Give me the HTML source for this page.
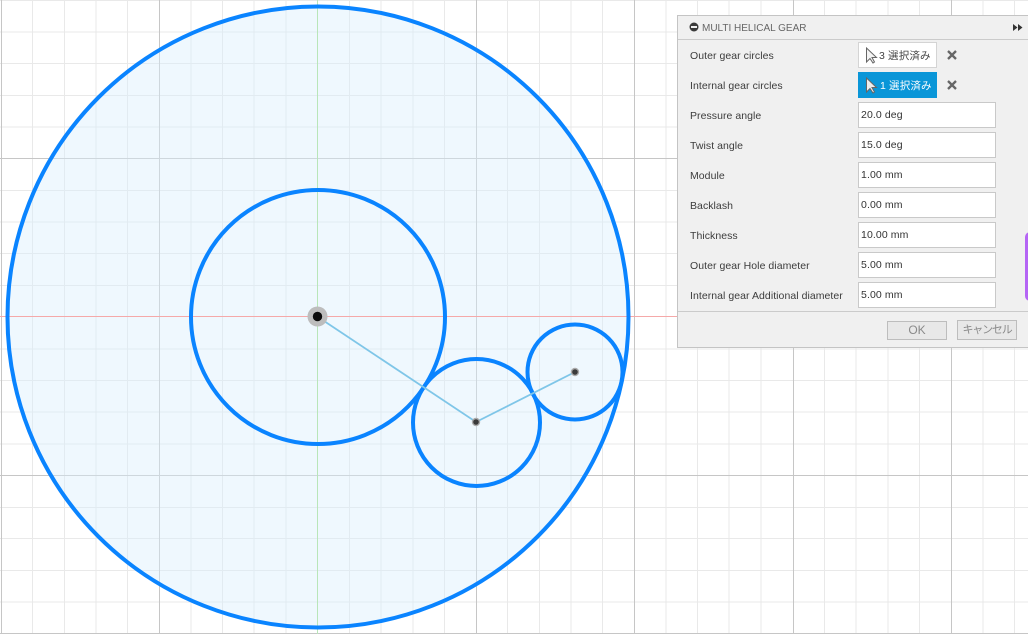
<!DOCTYPE html>
<html><head><meta charset="utf-8"><style>
html,body{margin:0;padding:0;width:1028px;height:634px;overflow:hidden;background:#fff}
body{position:relative;font-family:"Liberation Sans","Noto Sans CJK JP",sans-serif}
svg{position:absolute;left:0;top:0}
.panel{position:absolute;left:677px;top:15px;width:351px;height:333px;box-sizing:border-box;background:#f0f0f0;border:1px solid #c4c4c4;border-right:none}
.t,.title{position:absolute;font-size:10.5px;line-height:14px;color:#3c3c3c;white-space:nowrap}
.title{left:24px;top:5px;line-height:15px;color:#666;font-size:10px;letter-spacing:0}
.t{left:12px;letter-spacing:.05px}
.inp{position:absolute;left:180px;width:138px;height:26px;box-sizing:border-box;background:#fff;border:1px solid #c9c9c9;font-size:10.5px;line-height:24px;padding-left:2px;color:#333;letter-spacing:.1px}
.sel{position:absolute;left:180px;width:79px;height:26px;box-sizing:border-box;font-size:10.5px;line-height:26px;white-space:nowrap;letter-spacing:.15px}
.line{position:absolute;left:0;width:351px;height:1px;background:#cbcbcb}
.btn{position:absolute;box-sizing:border-box;background:#e8e8e8;border:1px solid #bdbdbd;color:#8a8a8a;text-align:center;font-size:12px;line-height:17px;white-space:nowrap;overflow:hidden}
</style></head><body>
<svg width="1028" height="634" viewBox="0 0 1028 634">
<g stroke="#e9e9e9" stroke-width="1">
<path d="M32.5 0V634M64.5 0V634M96 0V634M127.500 0V634M191 0V634M222.500 0V634M254 0V634M286 0V634M349.500 0V634M381 0V634M413 0V634M444.500 0V634M507.500 0V634M539.500 0V634M571 0V634M602.500 0V634M666 0V634M697.500 0V634M729 0V634M761 0V634M824.500 0V634M856 0V634M888 0V634M919.500 0V634M983 0V634M1014.500 0V634"/>
<path d="M0 .5H1028M0 32H1028M0 63.500H1028M0 95.500H1028M0 127H1028M0 190.500H1028M0 222H1028M0 253.500H1028M0 285.500H1028M0 349H1028M0 380.500H1028M0 412H1028M0 444H1028M0 507.500H1028M0 538.500H1028M0 570.500H1028M0 602H1028"/>
</g>
<g stroke="#c6c6c6" stroke-width="1">
<path d="M1.500 0V634M159.500 0V634M476.500 0V634M634.500 0V634M793.500 0V634M951.500 0V634"/>
<path d="M0 158.500H1028M0 475.500H1028M0 633.500H1028"/>
</g>
<circle cx="318" cy="317" r="310" fill="#d9eefc" fill-opacity=".42" stroke="none"/>
<path d="M317.500 0V634" stroke="#b9e6b9" stroke-width="1"/>
<path d="M0 316.500H1028" stroke="#f5a9a9" stroke-width="1"/>
<g fill="none" stroke="#0a84ff" stroke-width="4">
<circle cx="318" cy="317" r="310.500"/>
<circle cx="318" cy="317" r="127"/>
<circle cx="476.500" cy="422.500" r="63.500"/>
<circle cx="575" cy="372" r="47.500"/>
</g>
<path d="M318 317L476 422L575 372" fill="none" stroke="#7fc6e8" stroke-width="1.800"/>
<circle cx="317.500" cy="316.500" r="10" fill="#bdbdbd"/>
<circle cx="317.500" cy="316.500" r="4.700" fill="#0c0c0c"/>
<circle cx="476" cy="422" r="4.200" fill="#aaa"/>
<circle cx="476" cy="422" r="2.800" fill="#3a3a3a"/>
<circle cx="575" cy="372" r="4.200" fill="#aaa"/>
<circle cx="575" cy="372" r="2.800" fill="#3a3a3a"/>
</svg>
<div class="panel">
<svg width="351" height="333" style="left:-1px;top:-1px">
<circle cx="17" cy="12" r="4.500" fill="#3a3a3a"/><rect x="14" y="11" width="6" height="2" fill="#f0f0f0"/>
<path d="M336 9L340.500 12.500L336 16ZM341 9L345.500 12.500L341 16Z" fill="#333"/>
<path d="M271 36L279 44M279 36L271 44M271 66L279 74M279 66L271 74" stroke="#666" stroke-width="2.300" fill="none"/>
</svg>
<div class="title">MULTI HELICAL GEAR</div>
<div class="line" style="top:23px"></div>
<div class="t" style="top:33px">Outer gear circles</div>
<div class="t" style="top:63px">Internal gear circles</div>
<div class="t" style="top:93px">Pressure angle</div>
<div class="t" style="top:123px">Twist angle</div>
<div class="t" style="top:153px">Module</div>
<div class="t" style="top:183px">Backlash</div>
<div class="t" style="top:213px">Thickness</div>
<div class="t" style="top:243px">Outer gear Hole diameter</div>
<div class="t" style="top:273px">Internal gear Additional diameter</div>
<div class="sel" style="top:26px;background:#fff;border:1px solid #d4d4d4;color:#444;line-height:27px;padding-left:20px">3 選択済み
<svg width="14" height="18" style="left:5px;top:4px"><path d="M2.500 1V15L6 11.500L9 16L10.500 15L8 10.500H12.500Z" fill="#f4f4f4" stroke="#666" stroke-width="1"/></svg></div>
<div class="sel" style="top:56px;background:#0a96d8;color:#fff;line-height:28px;padding-left:22px">1 選択済み
<svg width="14" height="18" style="left:6px;top:5px"><path d="M2.500 1V15L6 11.500L9 16L10.500 15L8 10.500H12.500Z" fill="#eee" stroke="#666" stroke-width="1"/></svg></div>
<div class="inp" style="top:86px">20.0 deg</div>
<div class="inp" style="top:116px">15.0 deg</div>
<div class="inp" style="top:146px">1.00 mm</div>
<div class="inp" style="top:176px">0.00 mm</div>
<div class="inp" style="top:206px">10.00 mm</div>
<div class="inp" style="top:236px">5.00 mm</div>
<div class="inp" style="top:266px">5.00 mm</div>
<div class="line" style="top:295px"></div>
<div class="btn" style="left:209px;top:305px;width:60px;height:19px">OK</div>
<div class="btn" style="left:279px;top:304px;width:60px;height:20px;line-height:19px;font-size:11px;letter-spacing:-1.2px">キャンセル</div>
</div>
<div style="position:absolute;left:1025px;top:232px;width:10px;height:69px;background:#b565f5;border-radius:6px"></div>
</body></html>
